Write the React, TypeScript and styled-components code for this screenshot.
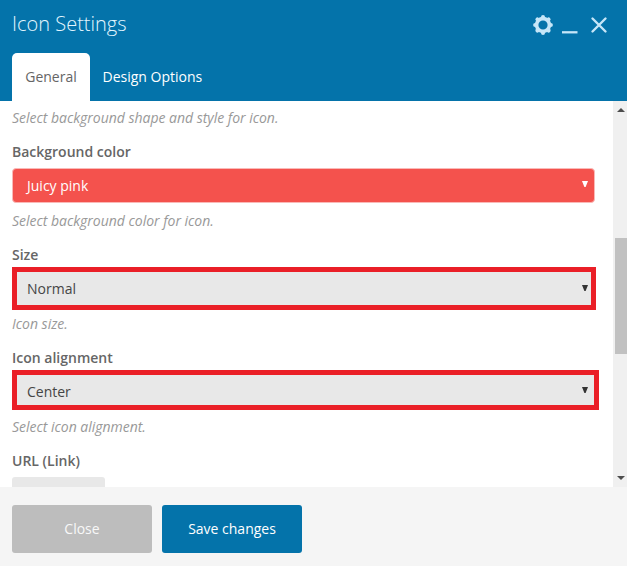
import React from 'react';
import styled, { createGlobalStyle } from 'styled-components';

const GlobalStyle = createGlobalStyle`
  * { box-sizing: border-box; }
  body { margin: 0; font-family: 'Open Sans', sans-serif; font-size: 14px; line-height: 20px; }
`;

const Panel = styled.div`
  display: flex;
  flex-direction: column;
  width: 627px;
  height: 566px;
  overflow: hidden;
  background: #fff;
`;

const Header = styled.header`
  display: flex;
  flex-direction: column;
  justify-content: space-between;
  height: 101px;
  flex: none;
  background: #0473aa;
`;

const TitleBar = styled.div`
  display: flex;
  justify-content: space-between;
  padding: 10px 19px 0 12px;
`;

const Title = styled.h1`
  margin: 0;
  font-size: 20px;
  line-height: 28px;
  font-weight: 300;
  color: #e3f6ff;
`;

const Controls = styled.div`
  display: flex;
  align-items: flex-start;
  padding-top: 5px;
  color: #c6e6f8;
  svg { display: block; }
`;

const Tabs = styled.nav`
  display: flex;
  padding-left: 12px;
`;

const Tab = styled.button<{ $active?: boolean }>`
  height: 48px;
  padding: 0 12.5px;
  border: 0;
  border-radius: 5px 5px 0 0;
  font: 400 14px/20px 'Open Sans', sans-serif;
  white-space: nowrap;
  color: ${p => (p.$active ? '#656565' : '#fff')};
  background: ${p => (p.$active ? '#fff' : 'transparent')};
  ${p => p.$active && 'width: 78px;'}
`;

const Body = styled.div`
  display: flex;
  flex: 1;
  min-height: 0;
`;

const Form = styled.main`
  flex: 1;
  overflow: hidden;
  padding: 7px 0 0 12px;
`;

const Field = styled.section`
  display: flex;
  flex-direction: column;
  align-items: flex-start;
  height: 103px;
`;

const Label = styled.label`
  height: 20px;
  font-weight: 600;
  letter-spacing: 0;
  color: #666;
`;

const Help = styled.p<{ $gap?: number }>`
  margin: ${p => p.$gap ?? 0}px 0 0;
  height: 20px;
  font-style: italic;
  letter-spacing: -0.02px;
  color: #999;
`;

const FirstHelp = styled(Help)`
  margin-bottom: 14px;
`;

const Select = styled.div`
  display: flex;
  align-items: center;
  justify-content: space-between;
  width: 583px;
  height: 35px;
  margin-top: 6px;
  padding: 0 6px 0 14px;
  border: 1px solid #fab9b7;
  border-radius: 4px;
  color: #fff;
  background: #f4524d;
  svg { margin-top: -3px; }
`;

const MarkedSelect = styled(Select)<{ $width: number; $height: number; $arrowGap: number; $drop: number }>`
  width: ${p => p.$width}px;
  height: ${p => p.$height}px;
  margin-top: 2px;
  padding: ${p => p.$drop}px ${p => p.$arrowGap}px 0 10px;
  border: 5px solid #ea1f27;
  border-radius: 0;
  color: #454545;
  background: #e8e8e8;
`;

const LinkButton = styled.div`
  width: 93px;
  height: 34px;
  margin-top: 6px;
  border-radius: 3px;
  background: #e8e8e8;
`;

const Scrollbar = styled.div`
  display: flex;
  flex-direction: column;
  align-items: center;
  width: 14px;
  padding: 7px 0 7px 2px;
  background: #f0f0f0;
`;

const Thumb = styled.div`
  width: 12px;
  height: 116px;
  margin-top: 126px;
  margin-bottom: auto;
  background: #c1c1c1;
`;

const Footer = styled.footer`
  display: flex;
  gap: 10px;
  height: 79px;
  flex: none;
  padding: 18px 12px;
  background: #f5f5f5;
`;

const Button = styled.button<{ $primary?: boolean }>`
  width: 140px;
  height: 48px;
  padding: 0;
  border: 0;
  border-radius: 3px;
  font: 400 14px/20px 'Open Sans', sans-serif;
  color: ${p => (p.$primary ? '#fff' : '#f8f8f8')};
  background: ${p => (p.$primary ? '#0473aa' : '#bdbdbd')};
`;

const Arrow = ({ color }: { color: string }) => (
  <svg width="6" height="6" viewBox="0 0 6 6"><path d="M0 0h6L3.6 6H2.4z" fill={color} /></svg>
);

const ScrollArrow = ({ down }: { down?: boolean }) => (
  <svg width="8" height="4" viewBox="0 0 8 4">
    <path d={down ? 'M0 0h8L4 4z' : 'M0 4h8L4 0z'} fill="#4d4d4d" />
  </svg>
);

const Gear = () => (
  <svg width="20" height="20" viewBox="0 0 20 20">
    <g fill="currentColor">
      {[0, 45, 90, 135, 180, 225, 270, 315].map(angle => (
        <circle key={angle} cx="10" cy="2.1" r="2" transform={`rotate(${angle} 10 10)`} />
      ))}
    </g>
    <circle cx="10" cy="10" r="6.4" fill="none" stroke="currentColor" strokeWidth="3.6" />
  </svg>
);

export default function App() {
  return (
    <Panel>
      <GlobalStyle />
      <Header>
        <TitleBar>
          <Title>Icon Settings</Title>
          <Controls>
            <Gear />
            <svg width="34" height="20"><path d="M9 17.3h15.5" stroke="currentColor" strokeWidth="2.3" /></svg>
            <svg width="21" height="20"><path d="M5.5 3.5l13 13M18.5 3.5l-13 13" stroke="currentColor" strokeWidth="2.4" strokeLinecap="round" /></svg>
          </Controls>
        </TitleBar>
        <Tabs>
          <Tab $active>General</Tab>
          <Tab>Design Options</Tab>
        </Tabs>
      </Header>
      <Body>
        <Form>
          <FirstHelp>Select background shape and style for icon.</FirstHelp>
          <Field>
            <Label>Background color</Label>
            <Select>Juicy pink<Arrow color="#fff" /></Select>
            <Help $gap={8}>Select background color for icon.</Help>
          </Field>
          <Field>
            <Label>Size</Label>
            <MarkedSelect $width={584} $height={43} $arrowGap={3} $drop={1}>Normal<Arrow color="#333" /></MarkedSelect>
            <Help $gap={4}>Icon size.</Help>
          </Field>
          <Field>
            <Label>Icon alignment</Label>
            <MarkedSelect $width={587} $height={40} $arrowGap={6} $drop={3}>Center<Arrow color="#333" /></MarkedSelect>
            <Help $gap={7}>Select icon alignment.</Help>
          </Field>
          <Field>
            <Label>URL (Link)</Label>
            <LinkButton />
          </Field>
        </Form>
        <Scrollbar>
          <ScrollArrow />
          <Thumb />
          <ScrollArrow down />
        </Scrollbar>
      </Body>
      <Footer>
        <Button>Close</Button>
        <Button $primary>Save changes</Button>
      </Footer>
    </Panel>
  );
}
